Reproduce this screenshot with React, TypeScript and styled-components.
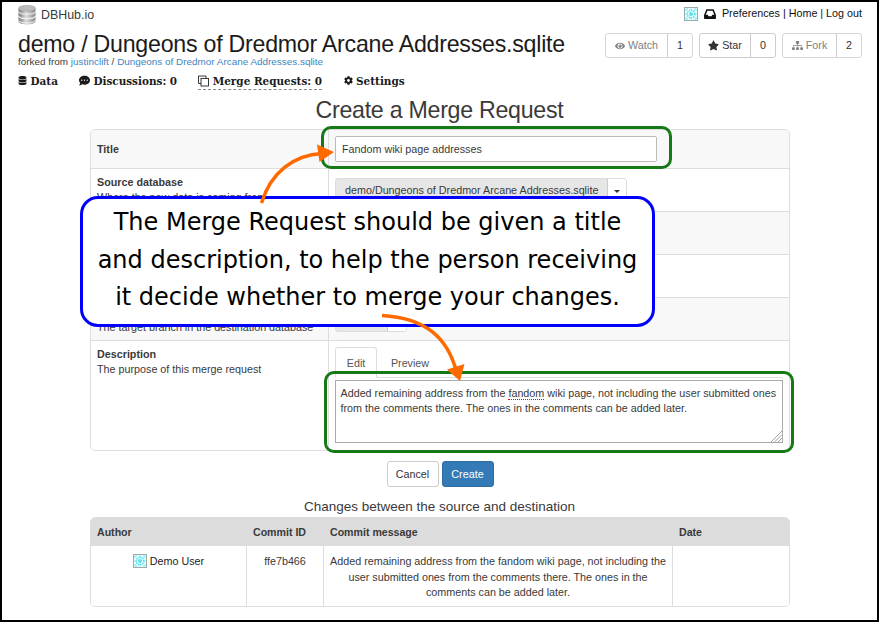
import React from 'react';
import styled, { createGlobalStyle } from 'styled-components';
import { FaDatabase, FaCommentDots, FaCog, FaEye, FaStar, FaSitemap } from 'react-icons/fa';

const GlobalStyle = createGlobalStyle`
  * { box-sizing: border-box; }
  body { margin: 0; background: #fff; }
`;

const Page = styled.div`
  position: relative;
  width: 879px;
  height: 622px;
  overflow: hidden;
  border: 2px solid #000;
  background: #fff;
  color: #3a3a3a;
  font-family: 'Liberation Sans', Arial, sans-serif;
  font-size: 10.76px;
  line-height: 15px;
`;

const TopBar = styled.header`
  display: flex;
  justify-content: space-between;
  height: 24px;
  padding: 3px 15px 0 16px;
`;

const Brand = styled.div`
  display: flex;
  gap: 5px;
  font-size: 12.4px;
  line-height: 21px;
`;

const AccountLinks = styled.nav`
  display: flex;
  align-items: center;
  height: 17px;
  color: #111;
  white-space: pre;
  svg { margin-right: 6px; }
`;

const RepoHeader = styled.section`
  display: flex;
  justify-content: space-between;
  height: 46px;
  padding: 5px 15px 0 16px;
`;

const RepoTitle = styled.h1`
  margin: 0;
  font-size: 23.2px;
  letter-spacing: -0.25px;
  line-height: 26px;
  font-weight: 400;
  color: #1b1b1b;
  white-space: nowrap;
`;

const ForkedFrom = styled.div`
  margin-top: -1px;
  font-size: 9.92px;
  line-height: 12px;
  a { color: #3d85c0; }
`;

const Actions = styled.div`
  display: flex;
  gap: 6px;
  padding-top: 2px;
`;

const ActionGroup = styled.div<{ $muted?: boolean }>`
  display: flex;
  height: 25px;
  border: 1px solid ${(p) => (p.$muted ? '#d6d6d6' : '#ccc')};
  border-radius: 3px;
  color: ${(p) => (p.$muted ? '#808080' : '#333')};
`;

const ActionLabel = styled.span<{ $w: number }>`
  display: flex;
  align-items: center;
  justify-content: center;
  gap: 3px;
  width: ${(p) => p.$w}px;
`;

const ActionCount = styled.span`
  display: flex;
  align-items: center;
  justify-content: center;
  width: 25px;
  border-left: 1px solid #ccc;
  color: #333;
`;

const TabNav = styled.nav`
  display: flex;
  height: 20px;
  padding-left: 16px;
  font: bold 10.45px/16px 'DejaVu Serif', serif;
  color: #1b1b1b;
`;

const NavTab = styled.a<{ $gap: number; $active?: boolean }>`
  display: flex;
  align-items: center;
  gap: 3.5px;
  height: 18px;
  margin-right: ${(p) => p.$gap}px;
  border-bottom: 1px ${(p) => (p.$active ? 'dashed #888' : 'solid transparent')};
  white-space: nowrap;
`;

const PageTitle = styled.h2`
  margin: 0;
  height: 37px;
  padding-top: 4px;
  text-align: center;
  font-size: 23.2px;
  letter-spacing: -0.27px;
  line-height: 28px;
  font-weight: 400;
`;

const FormPanel = styled.section`
  width: 700px;
  height: 322px;
  margin-left: 88px;
  border: 1px solid #ddd;
  border-radius: 5px;
  overflow: hidden;
`;

const FormRow = styled.div<{ $h: number; $shaded?: boolean }>`
  display: grid;
  grid-template-columns: 238px 1fr;
  height: ${(p) => p.$h}px;
  border-bottom: 1px solid #ddd;
  background: ${(p) => (p.$shaded ? '#f8f8f8' : '#fff')};
  &:last-child { border-bottom: 0; }
`;

const LabelCell = styled.div<{ $top?: number }>`
  padding: ${(p) => p.$top ?? 6}px 0 0 6px;
  border-right: 1px solid #ddd;
  white-space: nowrap;
`;

const FieldCell = styled.div<{ $top?: number }>`
  padding: ${(p) => p.$top ?? 6}px 6px 0;
`;

const FieldName = styled.div`
  font-weight: 700;
  font-size: 10.75px;
`;

const TitleInput = styled.div`
  width: 322px;
  height: 26px;
  padding-left: 6px;
  border: 1px solid #bbb;
  border-radius: 2px;
  background: #fff;
  line-height: 25px;
`;

const Dropdown = styled.div<{ $w: number }>`
  display: flex;
  width: ${(p) => p.$w}px;
  height: 26px;
  border: 1px solid #ddd;
  border-radius: 3px;
  background: #e6e6e6;
  overflow: hidden;
`;

const DropdownValue = styled.span`
  flex: 1;
  padding-left: 9px;
  line-height: 23px;
  white-space: nowrap;
`;

const DropdownToggle = styled.span`
  display: flex;
  align-items: center;
  justify-content: center;
  width: 19px;
  border-left: 1px solid #ccc;
  background: #fff;
  &::after {
    content: '';
    border: 3px solid transparent;
    border-top-color: #333;
    border-bottom: 0;
  }
`;

const EditorTabs = styled.div`
  display: flex;
  height: 31px;
  border-bottom: 1px solid #ddd;
  color: #555;
`;

const EditorTab = styled.span<{ $active?: boolean }>`
  height: 31px;
  width: ${(p) => (p.$active ? 42 : 66)}px;
  border: 1px solid ${(p) => (p.$active ? '#ddd' : 'transparent')};
  border-bottom-color: ${(p) => (p.$active ? '#fff' : 'transparent')};
  border-radius: 3px 3px 0 0;
  line-height: 30px;
  text-align: center;
`;

const DescriptionBox = styled.div`
  display: flex;
  justify-content: space-between;
  width: 448px;
  height: 63px;
  margin-top: 2px;
  padding: 5px 0 0 4.5px;
  border: 1px solid #aaa;
  white-space: nowrap;
  svg { align-self: flex-end; margin-left: -12px; }
`;

const Misspelled = styled.span`
  border-bottom: 1px dotted #ff0000;
`;

const FormButtons = styled.div`
  display: flex;
  justify-content: center;
  gap: 3px;
  margin-top: 10px;
  padding-left: 1px;
`;

const Button = styled.button<{ $primary?: boolean }>`
  width: 52px;
  height: 26px;
  padding: 0;
  border: 1px solid ${(p) => (p.$primary ? '#2e6da4' : '#ccc')};
  border-radius: 3px;
  background: ${(p) => (p.$primary ? '#337ab7' : '#fff')};
  color: ${(p) => (p.$primary ? '#fff' : '#333')};
  font: inherit;
`;

const SectionTitle = styled.h3`
  margin: 10px 0 1px;
  text-align: center;
  font-size: 13.5px;
  line-height: 19px;
  font-weight: 400;
`;

const CommitTable = styled.section`
  width: 700px;
  margin-left: 88px;
  border: 1px solid #ddd;
  border-radius: 5px;
  overflow: hidden;
`;

const CommitRow = styled.div<{ $head?: boolean }>`
  display: grid;
  grid-template-columns: 156px 77px 349px 1fr;
  height: ${(p) => (p.$head ? 28 : 60)}px;
  background: ${(p) => (p.$head ? '#dcdcdc' : '#fff')};
  font-weight: ${(p) => (p.$head ? 700 : 400)};
  font-size: ${(p) => (p.$head ? 10.6 : 10.76)}px;
`;

const HeadCell = styled.div`
  padding-left: 6px;
  line-height: 28px;
`;

const BodyCell = styled.div`
  padding: 8px 4px 0;
  border-right: 1px solid #ddd;
  line-height: 15.7px;
  text-align: center;
  white-space: nowrap;
  &:last-child { border-right: 0; }
`;

const AuthorName = styled.span`
  display: flex;
  justify-content: center;
  gap: 3px;
  color: #222;
`;

const Callout = styled.div`
  position: absolute;
  left: 78px;
  top: 194px;
  width: 575px;
  height: 131px;
  padding-top: 5px;
  border: 3px solid #0000fa;
  border-radius: 18px;
  background: #fff;
  color: #000;
  font: 24px/37.5px 'DejaVu Sans', sans-serif;
  text-align: center;
  white-space: nowrap;
`;

const Highlight = styled.div<{ $x: number; $y: number; $w: number; $h: number }>`
  position: absolute;
  left: ${(p) => p.$x}px;
  top: ${(p) => p.$y}px;
  width: ${(p) => p.$w}px;
  height: ${(p) => p.$h}px;
  border: 3px solid #177817;
  border-radius: 10px;
`;

const Arrows = styled.svg`
  position: absolute;
  left: -2px;
  top: -2px;
`;

const DatabaseLogo = () => (
  <svg width="18" height="20" viewBox="0 0 18 20">
    <defs>
      <linearGradient id="metal">
        <stop offset="0" stopColor="#777" />
        <stop offset=".45" stopColor="#ddd" />
        <stop offset="1" stopColor="#888" />
      </linearGradient>
    </defs>
    <path d="M.5 3.5v13c0 4 17 4 17 0v-13z" fill="url(#metal)" />
    <ellipse cx="9" cy="3.3" rx="8.5" ry="2.9" fill="#bcbcbc" stroke="#999" strokeWidth=".6" />
    <path d="M.5 6.6c1 3.5 16 3.5 17 0M.5 11c1 3.5 16 3.5 17 0M.5 15.3c1 3.5 16 3.5 17 0" fill="none" stroke="#f2f2f2" strokeWidth="1.1" />
  </svg>
);

const Avatar = () => (
  <svg width="14" height="14" viewBox="0 0 14 14" fill="none">
    <rect x=".5" y=".5" width="13" height="13" fill="#effdfd" stroke="#9aa" />
    <circle cx="7" cy="7" r="3.8" stroke="#4de1ee" strokeWidth="1.6" strokeDasharray="1.4 .8" />
    <circle cx="7" cy="7" r="2" fill="#5be0ec" />
    <path d="M2 4V2h2M10 2h2v2M12 10v2h-2M4 12H2v-2M7 1.5v2M7 10.5v2M1.5 7h2M10.5 7h2" stroke="#74e6ef" />
  </svg>
);

const InboxIcon = () => (
  <svg width="12" height="10" viewBox="0 0 12 10">
    <path d="M3 .9h6L11.2 6v3.2H.8V6z" fill="none" stroke="#111" strokeWidth="1.5" strokeLinejoin="round" />
    <path d="M.8 5.8h2.9l.8 1.5h3l.8-1.5h2.900v3.400H.8z" fill="#111" />
  </svg>
);

const CloneIcon = () => (
  <svg width="11" height="12" viewBox="0 0 11 12" fill="none" stroke="#222" strokeWidth=".9">
    <path d="M3 8.5H.5V1H8v2.3" />
    <rect x="3" y="3.4" width="7.5" height="7.6" />
  </svg>
);

const ResizeGrip = () => (
  <svg width="12" height="12" viewBox="0 0 12 12" stroke="#888" strokeWidth=".8">
    <path d="M1 12 12 1M4.5 12 12 4.5M8 12l4-4" />
  </svg>
);

export default function App() {
  return (
    <Page>
      <GlobalStyle />
      <TopBar>
        <Brand><DatabaseLogo />DBHub.io</Brand>
        <AccountLinks>
          <Avatar />
          <InboxIcon />
          <span>Preferences | Home | Log out</span>
        </AccountLinks>
      </TopBar>
      <RepoHeader>
        <div>
          <RepoTitle>demo / Dungeons of Dredmor Arcane Addresses.sqlite</RepoTitle>
          <ForkedFrom>forked from <a>justinclift</a> / <a>Dungeons of Dredmor Arcane Addresses.sqlite</a></ForkedFrom>
        </div>
        <Actions>
          <ActionGroup $muted><ActionLabel $w={61}><FaEye size={10} />Watch</ActionLabel><ActionCount>1</ActionCount></ActionGroup>
          <ActionGroup><ActionLabel $w={50}><FaStar size={11} />Star</ActionLabel><ActionCount>0</ActionCount></ActionGroup>
          <ActionGroup $muted><ActionLabel $w={53}><FaSitemap size={11} />Fork</ActionLabel><ActionCount>2</ActionCount></ActionGroup>
        </Actions>
      </RepoHeader>
      <TabNav>
        <NavTab $gap={21}><FaDatabase size={9} />Data</NavTab>
        <NavTab $gap={21}><FaCommentDots size={11} />Discussions: 0</NavTab>
        <NavTab $gap={21.5} $active><CloneIcon />Merge Requests: 0</NavTab>
        <NavTab $gap={0}><FaCog size={9} />Settings</NavTab>
      </TabNav>
      <PageTitle>Create a Merge Request</PageTitle>
      <FormPanel>
        <FormRow $h={39} $shaded>
          <LabelCell $top={12}><FieldName>Title</FieldName></LabelCell>
          <FieldCell><TitleInput>Fandom wiki page addresses</TitleInput></FieldCell>
        </FormRow>
        <FormRow $h={43}>
          <LabelCell><FieldName>Source database</FieldName>Where the new data is coming from</LabelCell>
          <FieldCell $top={9}>
            <Dropdown $w={292}><DropdownValue>demo/Dungeons of Dredmor Arcane Addresses.sqlite</DropdownValue><DropdownToggle /></Dropdown>
          </FieldCell>
        </FormRow>
        <FormRow $h={43} $shaded><LabelCell /><FieldCell /></FormRow>
        <FormRow $h={43}><LabelCell /><FieldCell /></FormRow>
        <FormRow $h={43} $shaded>
          <LabelCell $top={22}>The target branch in the destination database</LabelCell>
          <FieldCell $top={8}><Dropdown $w={72}><DropdownValue /><DropdownToggle /></Dropdown></FieldCell>
        </FormRow>
        <FormRow $h={109}>
          <LabelCell><FieldName>Description</FieldName>The purpose of this merge request</LabelCell>
          <FieldCell>
            <EditorTabs><EditorTab $active>Edit</EditorTab><EditorTab>Preview</EditorTab></EditorTabs>
            <DescriptionBox>
              <div>
                Added remaining address from the <Misspelled>fandom</Misspelled> wiki page, not including the user submitted ones<br />
                from the comments there. The ones in the comments can be added later.
              </div>
              <ResizeGrip />
            </DescriptionBox>
          </FieldCell>
        </FormRow>
      </FormPanel>
      <FormButtons><Button>Cancel</Button><Button $primary>Create</Button></FormButtons>
      <SectionTitle>Changes between the source and destination</SectionTitle>
      <CommitTable>
        <CommitRow $head>
          <HeadCell>Author</HeadCell><HeadCell>Commit ID</HeadCell><HeadCell>Commit message</HeadCell><HeadCell>Date</HeadCell>
        </CommitRow>
        <CommitRow>
          <BodyCell><AuthorName><Avatar />Demo User</AuthorName></BodyCell>
          <BodyCell>ffe7b466</BodyCell>
          <BodyCell>
            Added remaining address from the fandom wiki page, not including the<br />
            user submitted ones from the comments there. The ones in the<br />
            comments can be added later.
          </BodyCell>
          <BodyCell />
        </CommitRow>
      </CommitTable>
      <Highlight $x={319} $y={124} $w={351} $h={43} />
      <Highlight $x={322} $y={369} $w={470} $h={82} />
      <Callout>
        The Merge Request should be given a title<br />
        and description, to help the person receiving<br />
        it decide whether to merge your changes.
      </Callout>
      <Arrows width="879" height="622" viewBox="0 0 879 622">
        <g fill="none" stroke="#ff6a00" strokeWidth="3.5">
          <path d="M261.500 203C271 172 294 155 322 153.500" />
          <path d="M382 315.500C426 318 447 338 456 370" />
        </g>
        <path d="M317 144.500 334 152 319.500 162zM447 369.500 464.500 364 460 381z" fill="#ff6a00" />
      </Arrows>
    </Page>
  );
}
